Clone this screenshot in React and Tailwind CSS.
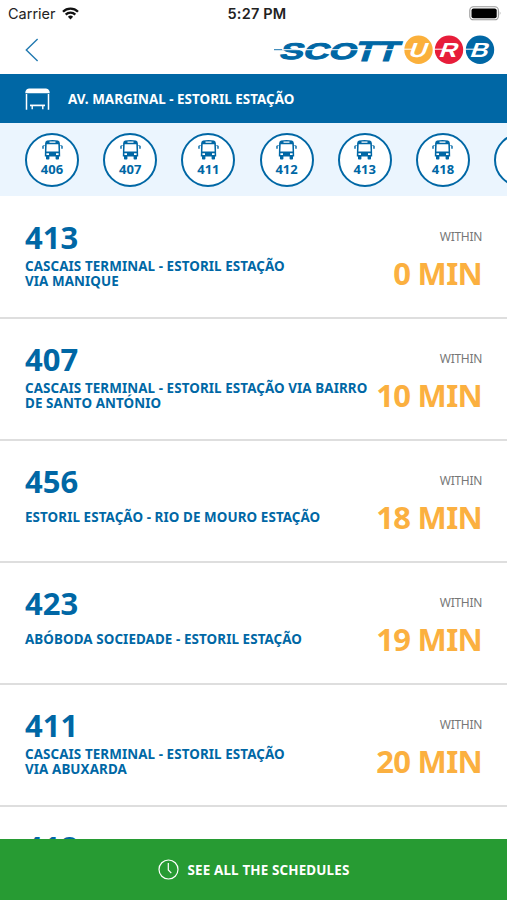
const ROUTES = ['406', '407', '411', '412', '413', '418', '456'];

const DEPARTURES = [
  { line: '413', text: ['CASCAIS TERMINAL - ESTORIL ESTAÇÃO', 'VIA MANIQUE'], wait: '0 MIN' },
  { line: '407', text: ['CASCAIS TERMINAL - ESTORIL ESTAÇÃO VIA BAIRRO', 'DE SANTO ANTÓNIO'], wait: '10 MIN' },
  { line: '456', text: ['ESTORIL ESTAÇÃO - RIO DE MOURO ESTAÇÃO'], wait: '18 MIN' },
  { line: '423', text: ['ABÓBODA SOCIEDADE - ESTORIL ESTAÇÃO'], wait: '19 MIN' },
  { line: '411', text: ['CASCAIS TERMINAL - ESTORIL ESTAÇÃO', 'VIA ABUXARDA'], wait: '20 MIN' },
];

function WifiIcon() {
  return (
    <svg className="ml-[6px] h-[13px] w-[17px]" viewBox="0 0 17 13" fill="none" stroke="#111" strokeWidth="2.3">
      <path d="M1 4.7a10.6 10.6 0 0 1 15 0M3.7 7.6a6.8 6.8 0 0 1 9.6 0" />
      <path d="M8.5 12.4 5.9 9.8a3.7 3.7 0 0 1 5.2 0z" fill="#111" stroke="none" />
    </svg>
  );
}

function BatteryIcon() {
  return (
    <svg className="h-[15px] w-[33px]" viewBox="0 0 33 15">
      <rect x="0.8" y="0.8" width="28.6" height="13" rx="3.6" fill="#fff" stroke="#999" strokeWidth="1.1" />
      <rect x="2.5" y="2.5" width="25.2" height="9.7" rx="2" fill="#000" />
      <path d="M30.8 5.2q1.6 2.1 0 4.3z" fill="#888" />
    </svg>
  );
}

function LogoDisc({ cx, color, letter }) {
  return (
    <g>
      <circle cx={cx} cy="15.7" r="14.2" fill={color} />
      <text
        transform={`translate(${cx - 2} 22.9) skewX(-20)`}
        textAnchor="middle"
        fontSize="20.5"
        textLength="18"
        lengthAdjust="spacingAndGlyphs"
        fill="#fff"
        className="font-['Liberation_Sans',sans-serif] font-bold"
      >
        {letter}
      </text>
      <path d={`M${cx - 15} 15.2H${cx - 6}`} stroke="#fff" strokeWidth="1" />
    </g>
  );
}

function Logo() {
  return (
    <svg className="h-8 w-[224px]" viewBox="0 0 224 32">
      <g fill="#0067a5" stroke="#0067a5" strokeWidth="0.9" className="font-['Liberation_Sans',sans-serif] font-bold">
        <text transform="translate(4.5 25) skewX(-18)" fontSize="22.5" textLength="77" lengthAdjust="spacingAndGlyphs">SCO</text>
        <text transform="translate(79.5 26.6) skewX(-18)" fontSize="28" textLength="43" lengthAdjust="spacingAndGlyphs" strokeWidth="1">TT</text>
      </g>
      <path d="M0 15.7H10" stroke="#0067a5" strokeWidth="0.9" />
      <path d="M8 15.7H123" stroke="#fff" strokeWidth="1" />
      <LogoDisc cx={144.5} color="#fbb03b" letter="U" />
      <LogoDisc cx={175} color="#e71d3a" letter="R" />
      <LogoDisc cx={206} color="#0067a5" letter="B" />
    </svg>
  );
}

function ShelterIcon() {
  return (
    <svg className="h-[22px] w-[25px]" viewBox="0 0 25 22" fill="none" stroke="#fff">
      <path d="M0.3 5.2C0.3 1.8 2.2.5 5 .5h15c2.8 0 4.7 1.3 4.7 4.7z" fill="#fff" stroke="none" />
      <path d="M1.5 6v15.8M23.5 6v15.8" strokeWidth="1.5" />
      <path d="M5 17.4h15" strokeWidth="1.7" />
      <path d="M7.2 17v4.2M17.8 17v4.2" strokeWidth="1.4" />
    </svg>
  );
}

function BusIcon() {
  return (
    <svg className="h-[20px] w-[21px]" viewBox="0 0 21 20" fill="#0067a5">
      <path fillRule="evenodd" d="M5 .5Q10.5-.4 16 .5q1.8.5 1.9 2.8L18.2 16.5H2.8L3.1 3.3Q3.2 1 5 .5zM4.7 4.2 4.4 11.6h12.2L16.3 4.2zM7.5 1.6v1.1h6V1.6zM4.4 13.2v1.8h2.6v-1.8zM14 13.2v1.8h2.6v-1.8z" />
      <path d="M4 16h3.4v2.8q0 .8-.8.8H4.8q-.8 0-.8-.8zM13.6 16H17v2.8q0 .8-.8.8h-1.8q-.8 0-.8-.8z" />
      <path d="M1 5.8v3M20 5.8v3" stroke="#0067a5" strokeWidth="1.4" />
      <path d="M1 5.6h2M18 5.6h2" stroke="#0067a5" strokeWidth="0.6" />
    </svg>
  );
}

function RouteBadge({ route }) {
  return (
    <div className="flex size-[54px] shrink-0 flex-col items-center rounded-full border-[2px] border-[#0067a5] bg-white pt-[5px]">
      <BusIcon />
      <span className="mt-[2px] text-[13px] leading-[15px] font-bold">{route}</span>
    </div>
  );
}

function Departure({ line, text, wait }) {
  return (
    <li className="flex h-[122px] shrink-0 justify-between border-b-2 border-[#dedede] pr-[25px] pl-[25px]">
      <div className="pt-5">
        <div className="text-[31px] leading-[40px] font-bold">{line}</div>
        <div className="mt-[1.5px] flex h-[30px] flex-col justify-center text-[13.4px] leading-[14.6px] font-bold tracking-[0.09px] whitespace-nowrap">
          {text.map((row) => (
            <span key={row}>{row}</span>
          ))}
        </div>
      </div>
      <div className="flex flex-col items-end whitespace-nowrap">
        <span className="mt-[30px] text-[12px] leading-5 tracking-[-0.3px] text-[#777]">WITHIN</span>
        <span className="mt-[6px] text-[31px] leading-10 font-bold tracking-[-0.7px] text-[#fbb040]">{wait}</span>
      </div>
    </li>
  );
}

export default function App() {
  return (
    <div className="flex h-[900px] w-[507px] flex-col overflow-hidden bg-white font-['Noto_Sans',sans-serif] text-[#0067a5]">
      <div className="grid h-[27px] shrink-0 grid-cols-3 items-center pr-[5px] pl-[8px] font-['Inter',sans-serif] text-[14.5px] text-[#222]">
        <div className="flex items-center">
          <span>Carrier</span>
          <WifiIcon />
        </div>
        <span className="pl-1 text-center font-semibold tracking-[0.2px]">5:27 PM</span>
        <div className="flex justify-end">
          <BatteryIcon />
        </div>
      </div>
      <header className="flex h-[47px] shrink-0 items-start justify-between pr-[9px] pl-[25px]">
        <svg className="mt-[11px] h-6 w-[14px]" viewBox="0 0 14 24" fill="none" stroke="#2179b0" strokeWidth="1.4">
          <path d="M12.6 1 1.3 12l11.3 11" />
        </svg>
        <div className="mt-[7px]">
          <Logo />
        </div>
      </header>
      <div className="flex h-[49px] shrink-0 items-center bg-[#0067a5] pl-[25px] text-white">
        <ShelterIcon />
        <h1 className="ml-[18px] pt-[2px] text-[13.4px] font-bold tracking-[0.04px]">AV. MARGINAL - ESTORIL ESTAÇÃO</h1>
      </div>
      <div className="flex h-[73px] shrink-0 gap-[24.2px] overflow-hidden bg-[#ebf5fe] pt-[10px] pl-[25px]">
        {ROUTES.map((route) => (
          <RouteBadge key={route} route={route} />
        ))}
      </div>
      <ul className="flex min-h-0 flex-1 flex-col overflow-hidden pt-px">
        {DEPARTURES.map((departure) => (
          <Departure key={departure.line} {...departure} />
        ))}
        <li className="shrink-0 pt-[20px] pl-[25px] text-[31px] leading-[40px] font-bold">418</li>
      </ul>
      <button className="flex h-[61px] shrink-0 items-center justify-center gap-[9px] bg-[#279b33] text-white">
        <svg className="size-[21px]" viewBox="0 0 21 21" fill="none" stroke="#fff" strokeWidth="1.2">
          <circle cx="10.5" cy="10.5" r="9.5" />
          <path d="M10.3 4v7l3 3.2" />
        </svg>
        <span className="pt-px text-[13.4px] font-bold tracking-[0.16px]">SEE ALL THE SCHEDULES</span>
      </button>
    </div>
  );
}
